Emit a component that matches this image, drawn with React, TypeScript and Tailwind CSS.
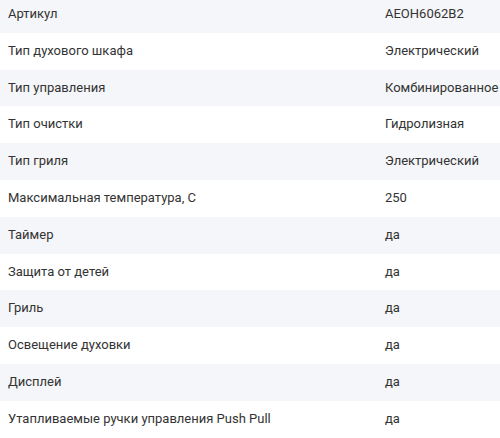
const specs: [string, string][] = [
  ["Артикул", "AEOH6062B2"],
  ["Тип духового шкафа", "Электрический"],
  ["Тип управления", "Комбинированное"],
  ["Тип очистки", "Гидролизная"],
  ["Тип гриля", "Электрический"],
  ["Максимальная температура, С", "250"],
  ["Таймер", "да"],
  ["Защита от детей", "да"],
  ["Гриль", "да"],
  ["Освещение духовки", "да"],
  ["Дисплей", "да"],
  ["Утапливаемые ручки управления Push Pull", "да"],
];

export default function App() {
  return (
    <div className="w-[500px] h-[438px] overflow-hidden bg-white">
      <div className="-mt-[4px] font-[Roboto,sans-serif] text-[13px] leading-[20.8px] text-[#333333]">
        {specs.map(([label, value], i) => (
          <div
            key={label}
            className={`grid grid-cols-[377px_1fr] ${i % 2 === 0 ? "bg-[#f5f6f9]" : "bg-white"}`}
          >
            <div className="px-2 py-2 whitespace-nowrap">{label}</div>
            <div className="px-2 py-2 whitespace-nowrap">{value}</div>
          </div>
        ))}
      </div>
    </div>
  );
}
